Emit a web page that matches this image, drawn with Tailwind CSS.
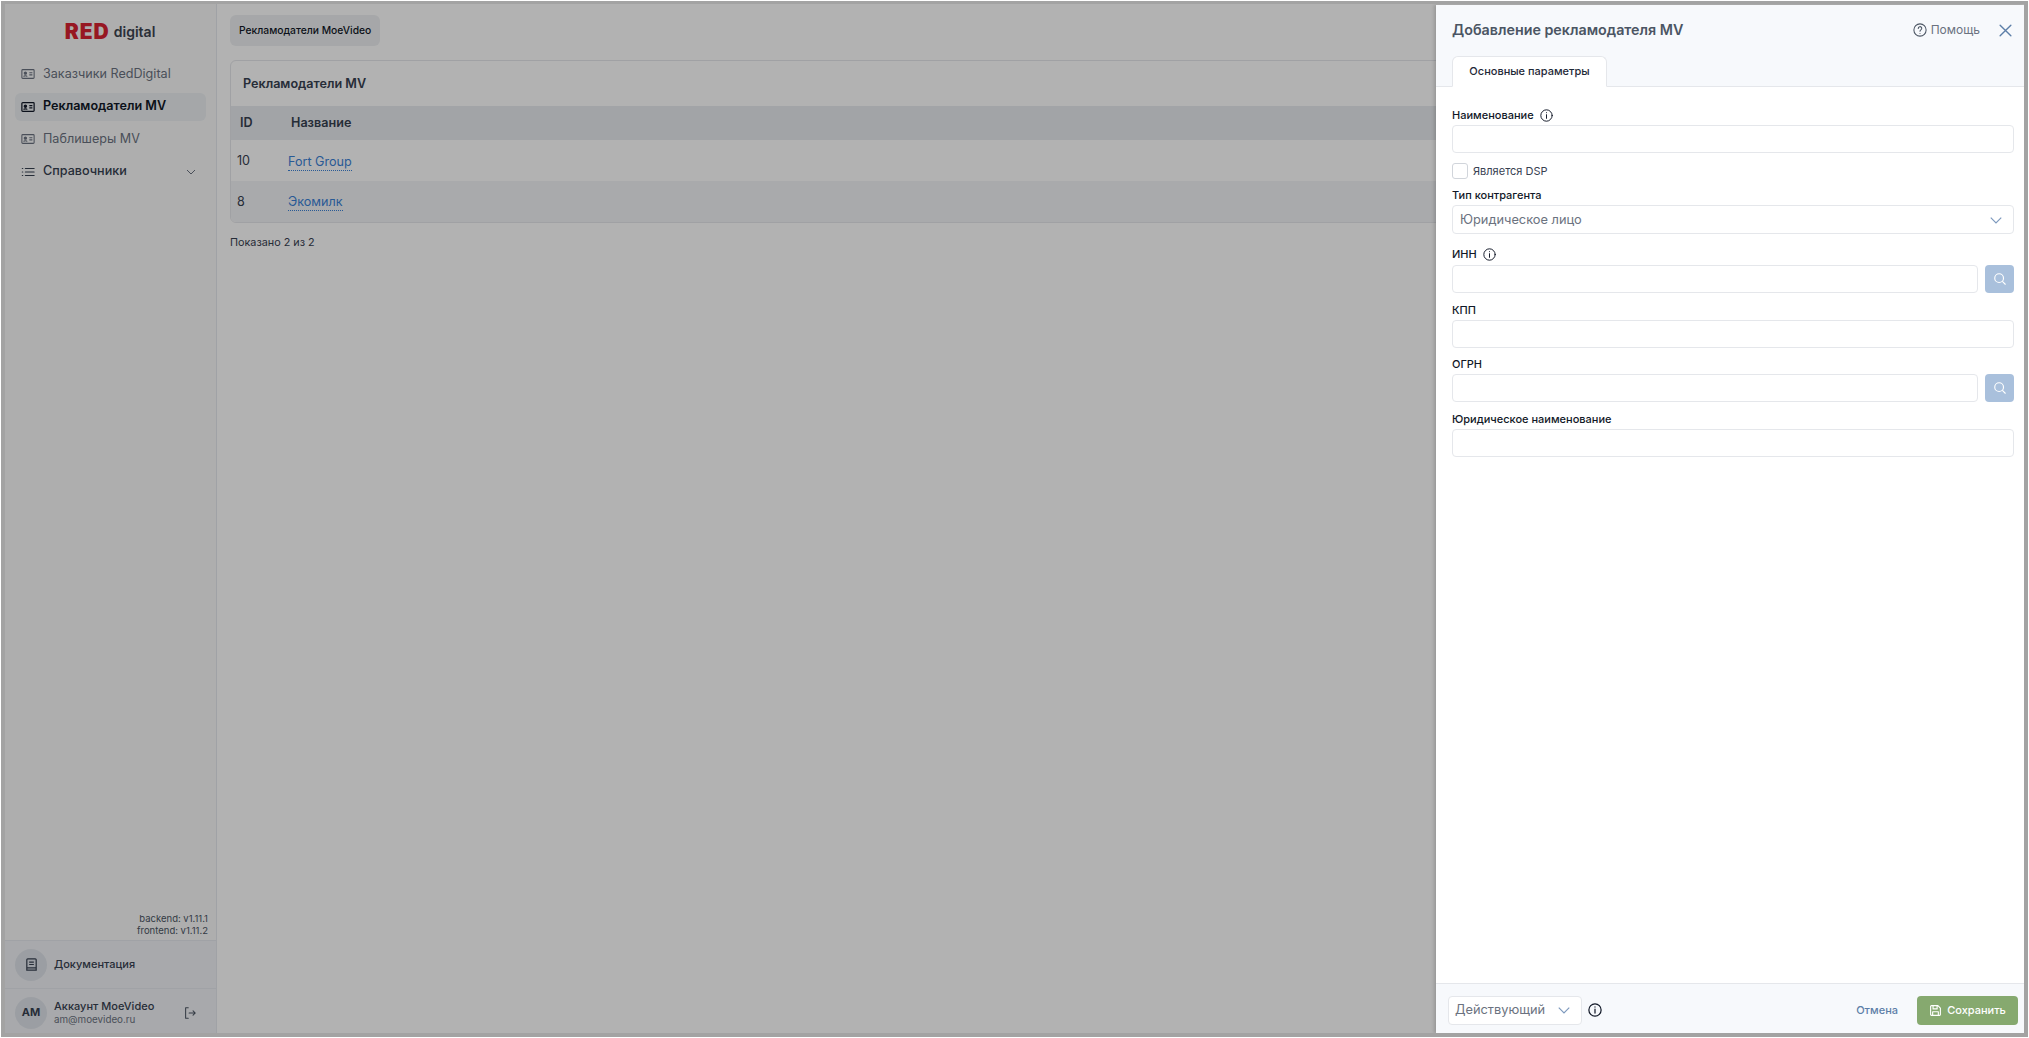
<!doctype html>
<html lang="ru">
<head>
<meta charset="utf-8">
<title>Рекламодатели MV</title>
<script src="https://cdn.jsdelivr.net/npm/@tailwindcss/browser@4"></script>
</head>
<body class="bg-white font-['Inter','Noto_Sans',sans-serif]">
<div class="h-screen w-screen p-px bg-white overflow-hidden">
  <div class="relative h-full w-full flex overflow-hidden border-t-[3px] border-r-[4px] border-b-[4px] border-l-[4px] border-[#a3a3a3] bg-white">
    <!-- sidebar -->
    <aside class="w-[212px] shrink-0 h-full flex flex-col bg-[#f9fafa] border-r border-[#e6e8ee]">
      <div class="h-[40px] flex items-end justify-center pr-[1px] gap-[4px]">
        <span class="text-[21px] leading-[24px] font-black tracking-[1px] text-[#d92231]">RED</span>
        <span class="text-[14px] leading-[24px] font-semibold text-[#3d4450]">digital</span>
      </div>
      <nav class="mt-[16px] px-[10px] flex flex-col gap-[4.5px] text-[12.6px]">
        <a class="h-[28px] flex items-center gap-[8px] pl-[6px] rounded-md text-[#6b7280]">
          <svg class="w-[14px] h-[14px]" viewBox="0 0 16 16" fill="none" stroke="currentColor" stroke-width="1.2"><rect x="1" y="3" width="14" height="10" rx="1"/><circle cx="5" cy="7" r="1.3" fill="currentColor"/><path d="M3 11c.4-1.300 3.600-1.300 4 0M9.500 6.500h3.500M9.500 9h3.500"/></svg>
          <span>Заказчики RedDigital</span>
        </a>
        <a class="h-[28px] flex items-center gap-[8px] pl-[6px] rounded-md bg-[#eceff2] text-[#111827] font-semibold">
          <svg class="w-[14px] h-[14px]" viewBox="0 0 16 16" fill="none" stroke="currentColor" stroke-width="1.4"><rect x="1" y="3" width="14" height="10" rx="1"/><circle cx="5" cy="7" r="1.3" fill="currentColor"/><path d="M3 11c.4-1.300 3.600-1.300 4 0M9.500 6.500h3.500M9.500 9h3.500"/></svg>
          <span>Рекламодатели MV</span>
        </a>
        <a class="h-[28px] flex items-center gap-[8px] pl-[6px] rounded-md text-[#6b7280]">
          <svg class="w-[14px] h-[14px]" viewBox="0 0 16 16" fill="none" stroke="currentColor" stroke-width="1.2"><rect x="1" y="3" width="14" height="10" rx="1"/><circle cx="5" cy="7" r="1.3" fill="currentColor"/><path d="M3 11c.4-1.300 3.600-1.300 4 0M9.500 6.500h3.500M9.500 9h3.500"/></svg>
          <span>Паблишеры MV</span>
        </a>
        <a class="h-[28px] flex items-center gap-[8px] pl-[6px] pr-[9px] rounded-md text-[#374151] font-medium">
          <svg class="w-[14px] h-[14px]" viewBox="0 0 16 16" fill="none" stroke="currentColor" stroke-width="1.3" stroke-linecap="round"><path d="M5 4h10M5 8h10M5 12h10M1.500 4h.5M1.500 8h.5M1.500 12h.5"/></svg>
          <span class="flex-1">Справочники</span>
          <svg class="w-[12px] h-[12px] text-[#6b7280]" viewBox="0 0 12 12" fill="none" stroke="currentColor" stroke-width="1"><path d="M2 4l4 4 4-4"/></svg>
        </a>
      </nav>
      <div class="flex-1 flex flex-col justify-end items-end pr-[8px] pb-[3px] text-[9.500px] leading-[12px] text-[#4b5563]">
        <div>backend: v1.11.1</div>
        <div>frontend: v1.11.2</div>
      </div>
      <div class="h-[49px] flex items-center gap-[7px] pl-[10px] bg-[#f1f3f6] border-t border-[#e6e8ee] border-b">
        <div class="w-[32px] h-[32px] rounded-full bg-[#dfe3ea] flex items-center justify-center text-[#374151]">
          <svg class="w-[15px] h-[15px]" viewBox="0 0 16 16" fill="none" stroke="currentColor" stroke-width="1.3"><path d="M3 14V3a1 1 0 0 1 1-1h8a1 1 0 0 1 1 1v11zM5.500 5.500h5M5.500 8h5M3 11.500h10"/></svg>
        </div>
        <span class="text-[11px] font-medium text-[#374151]">Документация</span>
      </div>
      <div class="h-[44px] pt-[3px] flex items-center gap-[7px] pl-[10px] bg-[#f1f3f6]">
        <div class="w-[32px] h-[32px] rounded-full bg-[#dfe3ea] flex items-center justify-center text-[11px] font-bold text-[#374151]">AM</div>
        <div class="flex flex-col leading-[13px] w-[122px]">
          <span class="text-[11px] font-medium text-[#374151]">Аккаунт MoeVideo</span>
          <span class="text-[9.800px] text-[#6b7280]">am@moevideo.ru</span>
        </div>
        <svg class="w-[14px] h-[14px] text-[#4b5563]" viewBox="0 0 16 16" fill="none" stroke="currentColor" stroke-width="1.200" stroke-linecap="round" stroke-linejoin="round"><path d="M6 2H3v12h3M7 8h7M11.500 5.500L14 8l-2.500 2.500"/></svg>
      </div>
    </aside>
    <!-- main -->
    <main class="flex-1 min-w-0 bg-white pl-[13px] pr-[13px] pt-[11px] text-[#1f2937]">
      <div class="inline-flex items-center h-[31px] px-[9px] rounded-md bg-[#eef0f2] text-[10.300px] font-medium text-[#111827]">Рекламодатели MoeVideo</div>
      <div class="mt-[14px] rounded-md border border-[#e5e7eb] bg-white overflow-hidden text-[12.6px]">
        <div class="h-[45px] pt-[2px] flex items-center pl-[12px] font-semibold text-[#374151]">Рекламодатели MV</div>
        <div class="h-[34px] pt-[1px] flex items-center bg-[#e9ebef] font-semibold text-[#374151]"><span class="w-[60px] pl-[9px]">ID</span><span>Название</span></div>
        <div class="h-[41px] pt-[2px] flex items-center bg-white"><span class="w-[57px] pl-[6px] text-[#374151]">10</span><span class="text-[#3b82d6] border-b border-dotted border-[#3b82d6] leading-[17px]">Fort Group</span></div>
        <div class="h-[41px] pt-[1px] flex items-center bg-[#f3f4f6]"><span class="w-[57px] pl-[6px] text-[#374151]">8</span><span class="text-[#3b82d6] border-b border-dotted border-[#3b82d6] leading-[17px]">Экомилк</span></div>
      </div>
      <div class="mt-[12px] text-[10.800px] text-[#374151]">Показано 2 из 2</div>
    </main>
    <!-- overlay -->
    <div class="absolute inset-0 bg-black/30"></div>
    <!-- drawer -->
    <section class="absolute top-[1px] bottom-0 right-0 w-[588px] flex flex-col bg-white shadow-[-2px_0_3px_rgba(0,0,0,0.15)] text-[#111827]">
      <header class="h-[82px] shrink-0 relative bg-[#f7f9fc] border-b border-[#e5e7eb] pl-[16px] pr-[11px]">
        <div class="h-[50px] flex items-center">
          <h2 class="flex-1 text-[14.300px] font-semibold text-[#4b5563]">Добавление рекламодателя MV</h2>
          <svg class="w-[14px] h-[14px] text-[#4b5563]" viewBox="0 0 16 16" fill="none" stroke="currentColor" stroke-width="1.200" stroke-linecap="round"><circle cx="8" cy="8" r="7"/><path d="M6 6.200a2 2 0 1 1 3 1.700c-.7.400-1 .8-1 1.500M8 12v.1"/></svg>
          <span class="ml-[4px] text-[12px] text-[#6b7280]">Помощь</span>
          <svg class="ml-[18px] w-[15px] h-[15px] text-[#5d7fa8]" viewBox="0 0 14 14" fill="none" stroke="currentColor" stroke-width="1.300" stroke-linecap="round"><path d="M2 2l10 10M12 2L2 12"/></svg>
        </div>
        <div class="absolute left-[16px] bottom-[-1px] w-[155px] h-[31px] bg-white border border-[#e5e7eb] border-b-white rounded-t-md flex items-center justify-center text-[11px] font-medium text-[#1f2937]">Основные параметры</div>
      </header>
      <div class="flex-1 pl-[16px] pr-[10px] pt-[19px] flex flex-col text-[11px]">
        <label class="h-[18px] flex items-center gap-[6px] font-medium">Наименование
          <svg class="w-[13px] h-[13px]" viewBox="0 0 16 16" fill="none" stroke="currentColor" stroke-width="1.200" stroke-linecap="round"><circle cx="8" cy="8" r="7"/><path d="M8 7v4.500M8 4.500v.1"/></svg>
        </label>
        <div class="mt-[1px] h-[28px] rounded-[4px] border border-[#e5e7eb]"></div>
        <div class="mt-[10px] h-[16px] flex items-center gap-[5px] text-[#374151]"><span class="w-[16px] h-[16px] rounded-[3px] border border-[#d1d5db]"></span>Является DSP</div>
        <label class="mt-[7px] h-[18px] flex items-center font-medium">Тип контрагента</label>
        <div class="mt-[1px] h-[29px] rounded-[4px] border border-[#e5e7eb] flex items-center pl-[7px] pr-[10px] text-[12.800px] text-[#6b7280]"><span class="flex-1">Юридическое лицо</span><svg class="w-[14px] h-[14px] text-[#7d99bd]" viewBox="0 0 12 12" fill="none" stroke="currentColor" stroke-width="1"><path d="M1.500 4l4.500 4.500L10.500 4"/></svg></div>
        <label class="mt-[11px] h-[20px] pb-[2px] flex items-center gap-[6px] font-medium">ИНН
          <svg class="w-[13px] h-[13px]" viewBox="0 0 16 16" fill="none" stroke="currentColor" stroke-width="1.200" stroke-linecap="round"><circle cx="8" cy="8" r="7"/><path d="M8 7v4.500M8 4.500v.1"/></svg>
        </label>
        <div class="h-[28px] flex gap-[7px]">
          <div class="flex-1 rounded-[4px] border border-[#e5e7eb]"></div>
          <div class="w-[29px] rounded-[4px] bg-[#a9c0dc] flex items-center justify-center text-white"><svg class="w-[14px] h-[14px]" viewBox="0 0 16 16" fill="none" stroke="currentColor" stroke-width="1.300" stroke-linecap="round"><circle cx="7" cy="7" r="5"/><path d="M11 11l3 3"/></svg></div>
        </div>
        <label class="mt-[9px] h-[18px] pb-[2px] flex items-center font-medium">КПП</label>
        <div class="h-[28px] rounded-[4px] border border-[#e5e7eb]"></div>
        <label class="mt-[8px] h-[18px] pb-[2px] flex items-center font-medium">ОГРН</label>
        <div class="h-[28px] flex gap-[7px]">
          <div class="flex-1 rounded-[4px] border border-[#e5e7eb]"></div>
          <div class="w-[29px] rounded-[4px] bg-[#a9c0dc] flex items-center justify-center text-white"><svg class="w-[14px] h-[14px]" viewBox="0 0 16 16" fill="none" stroke="currentColor" stroke-width="1.300" stroke-linecap="round"><circle cx="7" cy="7" r="5"/><path d="M11 11l3 3"/></svg></div>
        </div>
        <label class="mt-[9px] h-[18px] pb-[2px] flex items-center font-medium">Юридическое наименование</label>
        <div class="h-[28px] rounded-[4px] border border-[#e5e7eb]"></div>
      </div>
      <footer class="h-[50px] shrink-0 pt-[3px] bg-[#f7f9fc] border-t border-[#e5e7eb] flex items-center pl-[12px] pr-[6px]">
        <div class="w-[134px] h-[29px] rounded-[4px] border border-[#e5e7eb] bg-white flex items-center pl-[6px] pr-[10px] text-[12.800px] text-[#6b7280]"><span class="flex-1">Действующий</span><svg class="w-[14px] h-[14px] text-[#7d99bd]" viewBox="0 0 12 12" fill="none" stroke="currentColor" stroke-width="1"><path d="M1.500 4l4.500 4.500L10.500 4"/></svg></div>
        <svg class="ml-[6px] w-[14px] h-[14px]" viewBox="0 0 16 16" fill="none" stroke="currentColor" stroke-width="1.400" stroke-linecap="round"><circle cx="8" cy="8" r="7"/><path d="M8 7v4.500M8 4.500v.1"/></svg>
        <span class="ml-auto text-[11px] font-medium text-[#5d7fa8]">Отмена</span>
        <button class="ml-[19px] w-[101px] h-[29px] rounded-[4px] bg-[#86a96f] text-white flex items-center justify-center gap-[5px] text-[11px] font-medium">
          <svg class="w-[13px] h-[13px]" viewBox="0 0 16 16" fill="none" stroke="currentColor" stroke-width="1.400" stroke-linejoin="round"><path d="M2 3a1 1 0 0 1 1-1h8l3 3v8a1 1 0 0 1-1 1H3a1 1 0 0 1-1-1zM5 2v4h5V2M4.500 14V9.500h7V14"/></svg>
          Сохранить
        </button>
      </footer>
    </section>
  </div>
</div>
</body>
</html>
